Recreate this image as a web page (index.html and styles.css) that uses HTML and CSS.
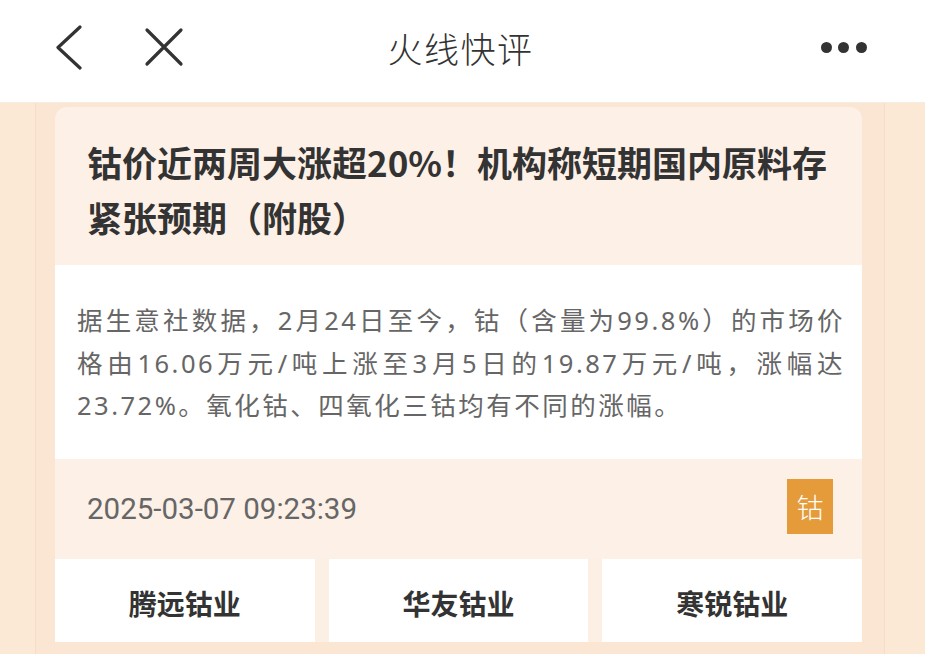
FILE: index.html
```html
<!DOCTYPE html>
<html lang="zh-CN">
<head>
<meta charset="utf-8">
<title>火线快评</title>
<link rel="stylesheet" href="styles.css">
</head>
<body>
<header class="topbar">
  <div class="nav-left">
    <svg class="icon back" width="30" height="46" viewBox="0 0 30 46"><path d="M26 3 L4 23.5 L26 44" fill="none" stroke="#333" stroke-width="3.2" stroke-linecap="round" stroke-linejoin="round"/></svg>
    <svg class="icon close" width="40" height="40" viewBox="0 0 40 40"><path d="M3 3 L37 37 M37 3 L3 37" fill="none" stroke="#333" stroke-width="3.2" stroke-linecap="round"/></svg>
  </div>
  <div class="title">火线快评</div>
  <div class="nav-right">
    <span class="dot"></span><span class="dot"></span><span class="dot"></span>
  </div>
</header>
<main class="page">
  <div class="rail">
    <article class="card">
      <h1 class="card-title">钴价近两周大涨超20%！机构称短期国内原料存紧张预期（附股）</h1>
      <div class="card-body">
        <p>据生意社数据，2月24日至今，钴（含量为99.8%）的市场价格由16.06万元/吨上涨至3月5日的19.87万元/吨，涨幅达23.72%。氧化钴、四氧化三钴均有不同的涨幅。</p>
      </div>
      <div class="card-meta">
        <span class="time">2025-03-07 09:23:39</span>
        <span class="tag">钴</span>
      </div>
      <div class="stocks">
        <div class="stock">腾远钴业</div>
        <div class="stock">华友钴业</div>
        <div class="stock">寒锐钴业</div>
      </div>
    </article>
  </div>
</main>
</body>
</html>
```

FILE: styles.css
```css
* { box-sizing: border-box; }
html, body {
  margin: 0;
  padding: 0;
  width: 925px;
  height: 654px;
  overflow: hidden;
  background: #fbe8d5;
  font-family: "Noto Sans CJK SC", "Noto Sans", sans-serif;
  color: #333;
}
.topbar {
  height: 103px;
  background: #fff;
  display: flex;
  align-items: center;
  justify-content: space-between;
  padding: 0 58px 8px 54px;
  border-bottom: 1px solid #f6ece2;
}
.nav-left {
  display: flex;
  align-items: center;
  gap: 60px;
  width: 200px;
}
.icon { display: block; }
.title {
  font-size: 35px;
  font-weight: 300;
  color: #333;
  letter-spacing: 1.5px;
}
.nav-right {
  width: 200px;
  display: flex;
  justify-content: flex-end;
  gap: 6.5px;
}
.dot {
  width: 11px;
  height: 11px;
  border-radius: 50%;
  background: #333;
}
.page {
  padding: 0 40px 0 35px;
  height: 551px;
}
.rail {
  height: 100%;
  background: #fae6d3;
  border-left: 1px solid #f7dcc6;
  border-right: 1px solid #f7dcc6;
  padding: 4px 22px 0 19px;
}
.card {
  background: #fdf0e6;
  border-radius: 12px 12px 0 0;
  overflow: hidden;
}
.card-title {
  margin: 0;
  padding: 27px 20px 21px 32px;
  font-size: 35px;
  line-height: 55px;
  font-weight: 700;
  color: #333;
}
.card-body {
  background: #fff;
  padding: 34px 17px 32px 22px;
}
.card-body p {
  margin: 0;
  font-family: "Noto Sans", "Noto Sans CJK SC", sans-serif;
  font-size: 25.5px;
  line-height: 42.5px;
  letter-spacing: 2.5px;
  color: #666;
  text-align: justify;
}
.card-meta {
  height: 100px;
  display: flex;
  align-items: center;
  justify-content: space-between;
  padding: 0 29px 0 32px;
}
.time {
  font-family: "Roboto", "Noto Sans", sans-serif;
  font-size: 29.5px;
  color: #666;
  letter-spacing: 0;
}
.tag {
  width: 46px;
  height: 55px;
  background: #e59b39;
  color: #fff;
  font-size: 27px;
  font-weight: 300;
  display: flex;
  align-items: center;
  justify-content: center;
  margin-top: -5px;
}
.stocks {
  display: grid;
  grid-template-columns: 1fr 1fr 1fr;
  gap: 14px;
  background: #fcefe4;
}
.stock {
  height: 83px;
  background: #fff;
  display: flex;
  align-items: center;
  justify-content: center;
  font-size: 28px;
  font-weight: 700;
  color: #333;
  padding-top: 6px;
}
```
